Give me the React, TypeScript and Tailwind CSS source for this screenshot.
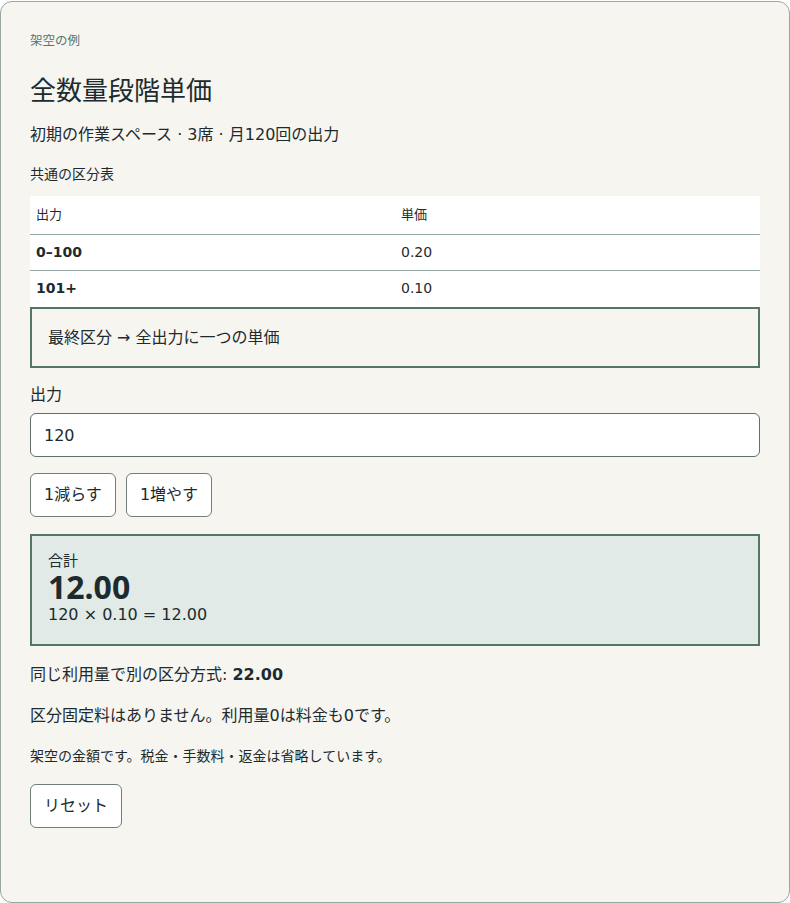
import React, { useState } from 'react';

const tiers = [
  { range: '0–100', price: 0.2 },
  { range: '101+', price: 0.1 },
];

export default function App() {
  const [usage, setUsage] = useState(120);
  const rate = usage > 100 ? 0.1 : 0.2;
  const total = usage * rate;

  return (
    <div className="pt-px bg-white" style={{ fontFamily: '"DejaVu Sans", "Noto Sans CJK JP", sans-serif' }}>
      <div className="h-[902px] rounded-xl border border-[#9aa6a2] bg-[#f6f5f0] px-[29px] pt-[30px] text-[#1d2b2e]">
        <div className="text-[12.5px] leading-[18px] text-[#557571]">架空の例</div>

        <h1 className="mt-[23px] text-[26px] leading-[36px]">全数量段階単価</h1>

        <p className="mt-[14px] text-[16px] leading-[24px]">初期の作業スペース · 3席 · 月120回の出力</p>

        <div className="mt-[17px] text-[14px] leading-[20px]">共通の区分表</div>

        <table className="mt-[12px] w-full border-collapse bg-white text-[14px]">
          <thead>
            <tr className="h-[38px] border-b border-[#94a7a2]">
              <th className="w-1/2 px-[6px] text-left text-[13px] font-normal">出力</th>
              <th className="px-[6px] text-left text-[13px] font-normal">単価</th>
            </tr>
          </thead>
          <tbody>
            {tiers.map((t, i) => (
              <tr key={t.range} className={i === 0 ? 'h-[36px] border-b border-[#94a7a2]' : 'h-[37px]'}>
                <td className="px-[6px] font-bold">{t.range}</td>
                <td className="px-[6px]">{t.price.toFixed(2)}</td>
              </tr>
            ))}
          </tbody>
        </table>

        <div className="flex h-[61px] items-center border-2 border-[#557565] px-[16px] text-[16px]">
          最終区分 → 全出力に一つの単価
        </div>

        <label className="mt-[15px] block text-[16px] leading-[24px]">出力</label>
        <input
          value={usage}
          onChange={(e) => setUsage(Math.max(0, Number(e.target.value) || 0))}
          className="mt-[6px] h-[44px] w-full rounded-md border border-[#5f716c] bg-white px-[13px] text-[16px] outline-none"
        />

        <div className="mt-[16px] flex gap-[10px]">
          <button
            onClick={() => setUsage((u) => Math.max(0, u - 1))}
            className="h-[44px] rounded-md border border-[#6f7f7a] bg-white px-[13px] text-[16px]"
          >
            1減らす
          </button>
          <button
            onClick={() => setUsage((u) => u + 1)}
            className="h-[44px] rounded-md border border-[#6f7f7a] bg-white px-[13px] text-[16px]"
          >
            1増やす
          </button>
        </div>

        <div className="mt-[17px] h-[112px] border-2 border-[#557565] bg-[#e1eae6] px-[16px] pt-[16px]">
          <div className="text-[15px] leading-[18px]">合計</div>
          <div className="font-['Noto_Sans'] text-[32px] font-bold leading-[34px]">{total.toFixed(2)}</div>
          <div className="text-[16px] leading-[22px]">
            {usage} × {rate.toFixed(2)} = {total.toFixed(2)}
          </div>
        </div>

        <p className="mt-[17px] text-[16px] leading-[24px]">
          同じ利用量で別の区分方式: <strong>22.00</strong>
        </p>

        <p className="mt-[17px] text-[16px] leading-[24px]">区分固定料はありません。利用量0は料金も0です。</p>

        <p className="mt-[18px] text-[14px] leading-[20px]">架空の金額です。税金・手数料・返金は省略しています。</p>

        <button
          onClick={() => setUsage(120)}
          className="mt-[18px] h-[44px] rounded-md border border-[#6f7f7a] bg-white px-[13px] text-[16px]"
        >
          リセット
        </button>
      </div>
    </div>
  );
}
